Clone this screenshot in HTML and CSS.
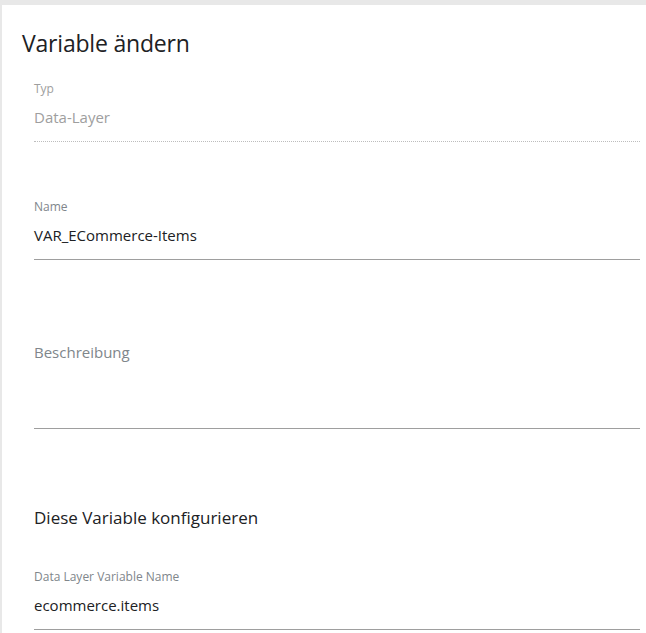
FILE: index.html
```html
<!DOCTYPE html>
<html>

    <head>
        <link rel="stylesheet" href="styles.css">
    </head>

    <body>
        <div class="sheet">
            <h1 class="title">Variable ändern</h1>

            <div class="field readonly">
                <div class="label">Typ</div>
                <div class="value">Data-Layer</div>
            </div>

            <div class="field name-field">
                <div class="label">Name</div>
                <div class="value">VAR_ECommerce-Items</div>
            </div>

            <div class="field desc-field">
                <div class="placeholder">Beschreibung</div>
            </div>

            <h2 class="section">Diese Variable konfigurieren</h2>

            <div class="field dlv-field">
                <div class="label">Data Layer Variable Name</div>
                <div class="value">ecommerce.items</div>
            </div>
        </div>
    </body>

</html>
```

FILE: styles.css
```css
html, body {
    margin: 0;
    padding: 0;
    height: 100%;
    overflow: hidden;
}
body {
    background: #e8e8e8;
    font-family: "Open Sans", "Noto Sans", sans-serif;
    padding: 5px 0 0 2px;
    box-sizing: border-box;
}
.sheet {
    background: #fff;
    height: 100%;
    padding: 24px 6px 0 20px;
    box-sizing: border-box;
}
.title {
    margin: 0;
    font-size: 23px;
    font-weight: 400;
    letter-spacing: -0.2px;
    color: #202124;
    line-height: 28px;
}
.field {
    margin-left: 12px;
    border-bottom: 1px solid #9e9e9e;
}
.label {
    font-size: 12px;
    line-height: 16px;
    color: #80868b;
}
.value {
    font-size: 15px;
    line-height: 20px;
    color: #202124;
    padding: 10px 0 14px;
}
.readonly {
    margin-top: 24px;
    border-bottom: 1px dotted #bdbdbd;
}
.readonly .label,
.readonly .value {
    color: #9e9e9e;
}
.name-field {
    margin-top: 57px;
}
.desc-field {
    margin-top: 82px;
    height: 86px;
}
.placeholder {
    font-size: 15px;
    line-height: 20px;
    color: #80868b;
}
.section {
    margin: 77px 0 0 12px;
    font-size: 17px;
    font-weight: 400;
    line-height: 24px;
    color: #202124;
}
.dlv-field {
    margin-top: 39px;
}
```
